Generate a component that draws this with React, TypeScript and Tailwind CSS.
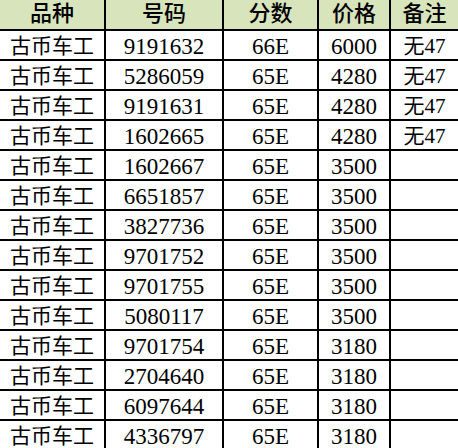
import React from "react";

const rows: [string, string, string, string][] = [
  ["9191632", "66E", "6000", "无47"],
  ["5286059", "65E", "4280", "无47"],
  ["9191631", "65E", "4280", "无47"],
  ["1602665", "65E", "4280", "无47"],
  ["1602667", "65E", "3500", ""],
  ["6651857", "65E", "3500", ""],
  ["3827736", "65E", "3500", ""],
  ["9701752", "65E", "3500", ""],
  ["9701755", "65E", "3500", ""],
  ["5080117", "65E", "3500", ""],
  ["9701754", "65E", "3180", ""],
  ["2704640", "65E", "3180", ""],
  ["6097644", "65E", "3180", ""],
  ["4336797", "65E", "3180", ""],
];

const cols = "grid grid-cols-[106px_118px_95px_72px_67px]";
const cell = "flex items-center justify-center border-r-2 border-b-2 border-black";
const last = "flex items-center justify-center border-b-2 border-black";

export default function App() {
  return (
    <div
      className="w-[458px] h-[448px] overflow-hidden bg-white text-black"
      style={{ fontFamily: '"Liberation Serif", "Noto Sans CJK SC", serif' }}
    >
      <div className={`${cols} h-[31px] bg-[#d8e4bc] text-[22px] font-medium leading-none`}>
        {["品种", "号码", "分数", "价格"].map((h) => (
          <div key={h} className={`${cell} pb-[2px]`}>
            {h}
          </div>
        ))}
        <div className={`${last} pb-[2px]`}>备注</div>
      </div>
      {rows.map((r, i) => (
        <div key={i} className={`${cols} h-[30px] leading-none`}>
          <div className={`${cell} text-[21px] pt-[2px]`}>古币车工</div>
          <div className={`${cell} text-[23px] pt-[3px]`}>{r[0]}</div>
          <div className={`${cell} text-[23px] pt-[3px]`}>{r[1]}</div>
          <div className={`${cell} text-[23px] pt-[3px]`}>{r[2]}</div>
          <div className={`${last} text-[21px] pt-[3px]`}>{r[3]}</div>
        </div>
      ))}
    </div>
  );
}
